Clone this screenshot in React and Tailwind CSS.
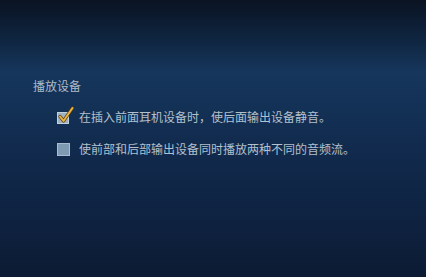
import React from 'react';

const font = { fontFamily: '"Noto Sans CJK SC", "Liberation Sans", sans-serif' };

function CheckedBox() {
  return (
    <span className="relative w-[13px] h-[13px] shrink-0">
      <span className="absolute left-0 top-[1px] w-[12px] h-[12px] bg-[#9fb2c2] border border-[#c3cfda]" />
      <svg className="absolute left-[1px] top-[-5px]" width="16" height="18" viewBox="0 0 16 18">
        <path d="M2 10.5 L5.5 15 L14.5 2" fill="none" stroke="#5a3a10" strokeWidth="3.2" strokeLinecap="round" strokeLinejoin="round" />
        <path d="M2 10.5 L5.5 15 L14.5 2" fill="none" stroke="#e8b640" strokeWidth="2" strokeLinecap="round" strokeLinejoin="round" />
      </svg>
    </span>
  );
}

function EmptyBox() {
  return (
    <span className="w-[13px] h-[13px] shrink-0 bg-[#7f9ab3] border border-[#a9bccd]" />
  );
}

function Option({ checked, children }) {
  return (
    <div className="flex items-center gap-[9px]">
      {checked ? <CheckedBox /> : <EmptyBox />}
      <span className="text-[12px] leading-[16px] text-[#b3c0cd]">{children}</span>
    </div>
  );
}

export default function App() {
  return (
    <div
      className="w-[426px] h-[277px] overflow-hidden bg-[linear-gradient(180deg,#0a1322_0%,#0f2540_14%,#16365c_26%,#133055_40%,#10284a_60%,#0e2240_80%,#0c1b33_100%)]"
      style={font}
    >
      <div className="pt-[78px] pl-[33px]">
        <div className="text-[12px] leading-[16px] text-[#aebbc9]">播放设备</div>
        <div className="pl-[24px] pt-[15px] flex flex-col gap-[16px]">
          <Option checked>在插入前面耳机设备时，使后面输出设备静音。</Option>
          <Option>使前部和后部输出设备同时播放两种不同的音频流。</Option>
        </div>
      </div>
    </div>
  );
}
